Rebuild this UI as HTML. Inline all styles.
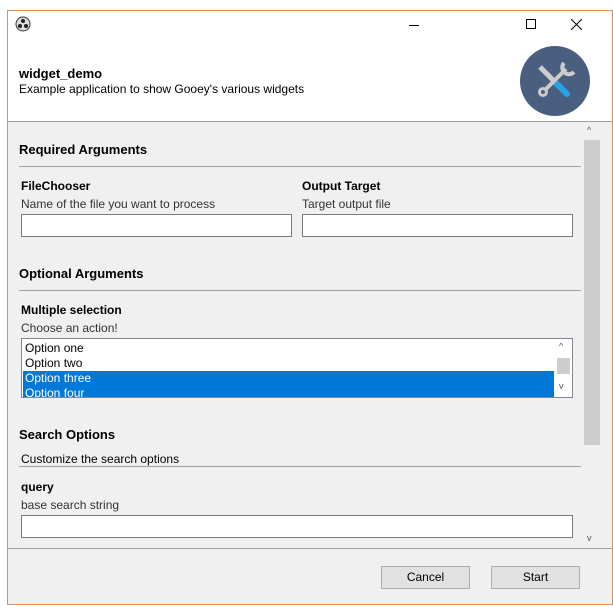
<!DOCTYPE html><html><head><style>
*{margin:0;padding:0;box-sizing:border-box}
body{width:613px;height:613px;background:#fff;font-family:"Liberation Sans",sans-serif;font-size:12px;color:#000;position:relative;overflow:hidden}
.a{position:absolute}
.b{font-weight:bold}
.in{position:absolute;background:#fff;border:1px solid #7a7a7a}
.hr{position:absolute;height:1px;background:#a0a0a0}
.btn{position:absolute;background:#e1e1e1;border:1px solid #adadad;text-align:center;line-height:21px;font-size:12px}
</style></head><body>
<div class="a" style="left:7px;top:10px;width:606px;height:595px;border:1px solid #e0905a;background:#fff"></div>
<svg class="a" style="left:15px;top:16px" width="16" height="16" viewBox="0 0 16 16"><circle cx="8" cy="8" r="7" fill="#ddd" stroke="#333"/><circle cx="8" cy="5" r="2" fill="#222"/><circle cx="5" cy="10" r="2" fill="#222"/><circle cx="11" cy="10" r="2" fill="#222"/></svg>
<div class="a" style="left:409px;top:25px;width:10px;height:1px;background:#000"></div>
<div class="a" style="left:526px;top:19px;width:10px;height:10px;border:1px solid #000"></div>
<svg class="a" style="left:571px;top:19px" width="11" height="11"><path d="M0 0L11 11M11 0L0 11" stroke="#000"/></svg>
<div class="a b" style="left:19px;top:66px;font-size:13px">widget_demo</div>
<div class="a" style="left:19px;top:82px">Example application to show Gooey's various widgets</div>
<svg class="a" style="left:520px;top:46px" width="70" height="70" viewBox="0 0 70 70"><circle cx="35" cy="35" r="35" fill="#4a5f80"/><path d="M20 21L33 34" stroke="#ccc" stroke-width="5"/><path d="M35 36L47 48" stroke="#29a3e6" stroke-width="6" stroke-linecap="round"/><path d="M46 23L25 44" stroke="#ccc" stroke-width="4"/><circle cx="23" cy="46" r="3.5" fill="none" stroke="#ccc" stroke-width="3"/><path d="M44 17A6 6 0 1 0 54 26" fill="none" stroke="#ccc" stroke-width="4"/></svg>
<div class="a" style="left:8px;top:121px;width:604px;height:1px;background:#a0a0a0"></div>
<div class="a" style="left:8px;top:122px;width:604px;height:482px;background:#f0f0f0"></div>
<div class="a" style="left:584px;top:140px;width:16px;height:305px;background:#cdcdcd"></div>
<div class="a" style="left:587px;top:125px;font-size:9px;color:#555">^</div>
<div class="a" style="left:587px;top:533px;font-size:9px;color:#555">v</div>
<div class="a b" style="left:19px;top:142px;font-size:13px">Required Arguments</div>
<div class="hr" style="left:19px;top:166px;width:562px"></div>
<div class="a b" style="left:21px;top:179px">FileChooser</div>
<div class="a" style="left:21px;top:197px;color:#333">Name of the file you want to process</div>
<div class="in" style="left:21px;top:214px;width:271px;height:23px"></div>
<div class="a b" style="left:302px;top:179px">Output Target</div>
<div class="a" style="left:302px;top:197px;color:#333">Target output file</div>
<div class="in" style="left:302px;top:214px;width:271px;height:23px"></div>
<div class="a b" style="left:19px;top:266px;font-size:13px">Optional Arguments</div>
<div class="hr" style="left:19px;top:290px;width:562px"></div>
<div class="a b" style="left:21px;top:303px">Multiple selection</div>
<div class="a" style="left:21px;top:321px;color:#333">Choose an action!</div>
<div class="in" style="left:21px;top:338px;width:552px;height:60px;overflow:hidden;border-color:#828790">
<div style="position:absolute;left:1px;top:32px;width:531px;height:26px;background:#0078d7"></div>
<div class="a" style="left:3px;top:2px">Option one</div>
<div class="a" style="left:3px;top:17px">Option two</div>
<div class="a" style="left:3px;top:32px;color:#fff">Option three</div>
<div class="a" style="left:3px;top:47px;color:#fff">Option four</div>
<div class="a" style="left:535px;top:19px;width:13px;height:16px;background:#cdcdcd"></div>
<div class="a" style="left:537px;top:2px;font-size:9px;color:#555">^</div>
<div class="a" style="left:537px;top:42px;font-size:9px;color:#555">v</div>
</div>
<div class="a b" style="left:19px;top:427px;font-size:13px">Search Options</div>
<div class="a" style="left:21px;top:452px">Customize the search options</div>
<div class="hr" style="left:19px;top:466px;width:562px"></div>
<div class="a b" style="left:21px;top:480px">query</div>
<div class="a" style="left:21px;top:498px;color:#333">base search string</div>
<div class="in" style="left:21px;top:515px;width:552px;height:23px"></div>
<div class="a" style="left:8px;top:548px;width:604px;height:1px;background:#a0a0a0"></div>
<div class="btn" style="left:381px;top:566px;width:89px;height:23px">Cancel</div>
<div class="btn" style="left:491px;top:566px;width:89px;height:23px">Start</div>
</body></html>
